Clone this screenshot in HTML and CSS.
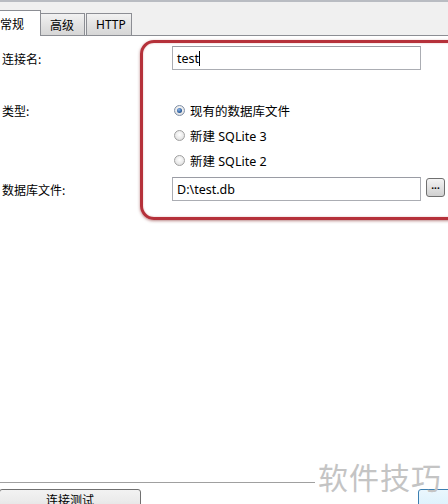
FILE: index.html
```html
<!DOCTYPE html>
<html>
<head>
<meta charset="utf-8">
<link rel="stylesheet" href="styles.css">
</head>
<body>
<div class="window">
  <div class="tabstrip">
    <div class="tab active">常规</div>
    <div class="tab">高级</div>
    <div class="tab">HTTP</div>
    <div class="tabfill"></div>
  </div>
  <div class="panel">
    <div class="row row-name">
      <div class="label">连接名:</div>
      <div class="input"><span>test</span><span class="caret"></span></div>
    </div>
    <div class="row row-type">
      <div class="label">类型:</div>
      <div class="radios">
        <div class="radio-row"><span class="radio checked"></span><span>现有的数据库文件</span></div>
        <div class="radio-row"><span class="radio"></span><span>新建 SQLite 3</span></div>
        <div class="radio-row"><span class="radio"></span><span>新建 SQLite 2</span></div>
      </div>
    </div>
    <div class="row row-file">
      <div class="label">数据库文件:</div>
      <div class="input"><span>D:\test.db</span></div>
      <div class="browse">...</div>
    </div>
    <div class="spacer"></div>
    <div class="footer">
      <div class="sep"></div>
      <div class="buttons">
        <div class="btn test">连接测试</div>
        <div class="btn ok"></div>
      </div>
    </div>
    <div class="highlight"></div>
    <div class="watermark">软件技巧</div>
  </div>
</div>
</body>
</html>
```

FILE: styles.css
```css
html, body {
  margin: 0;
  padding: 0;
}
body {
  width: 448px;
  height: 504px;
  overflow: hidden;
  background: #ffffff;
  font-family: "Noto Sans", "Noto Sans CJK SC", sans-serif;
  font-size: 12px;
  color: #000;
}
.window {
  height: 504px;
  display: flex;
  flex-direction: column;
  background: #f0f0f0;
  border-top: 2px solid #b9bcc2;
  box-sizing: border-box;
}
.tabstrip {
  display: flex;
  align-items: flex-end;
  height: 34px;
  box-sizing: border-box;
}
.tab {
  height: 22px;
  box-sizing: border-box;
  border: 1px solid #8c8e94;
  border-bottom: none;
  background: linear-gradient(#f2f2f2, #e3e3e3 50%, #d6d6d6);
  padding: 0 9px;
  display: flex;
  align-items: center;
  font-family: "Noto Sans CJK SC", sans-serif;
  font-size: 12px;
  margin-right: 2px;
  margin-bottom: 1px;
}
.tab:nth-child(2) { width: 44px; margin-right: 1px; border-left: none; }
.tab:nth-child(3) { width: 46px; font-family: "Noto Sans", sans-serif; }
.tab.active {
  background: #fff;
  height: 26px;
  width: 41px;
  padding-left: 0;
  margin-right: 0;
  margin-bottom: 0;
  border-left: none;
  position: relative;
  z-index: 1;
}
.tabfill {
  flex: 1;
  border-bottom: 1px solid #8c8e94;
  align-self: stretch;
}
.tab:nth-child(2), .tab:nth-child(3) {
  border-bottom: 1px solid #8c8e94;
  margin-bottom: 0;
  height: 23px;
}
.panel {
  flex: 1;
  position: relative;
  background: #fff;
  display: flex;
  flex-direction: column;
  margin-top: -1px;
  border-top: 1px solid #8c8e94;
}
.row {
  display: flex;
  align-items: center;
}
.label {
  width: 172px;
  padding-left: 2px;
  box-sizing: border-box;
  font-family: "Noto Sans CJK SC", sans-serif;
  font-size: 12px;
  flex-shrink: 0;
}
.row-name {
  margin-top: 10px;
  position: relative;
  z-index: 2;
}
.input {
  width: 249px;
  height: 24px;
  box-sizing: border-box;
  border: 1px solid #abadb3;
  border-top-color: #9a9ca4;
  background: #fff;
  display: flex;
  align-items: center;
  padding-left: 4px;
  font-family: "Noto Sans", sans-serif;
  font-size: 12.5px;
}
.caret {
  display: inline-block;
  width: 1px;
  height: 15px;
  background: #000;
}
.row-type {
  margin-top: 28px;
  align-items: flex-start;
  position: relative;
  z-index: 2;
}
.row-type .label {
  height: 25px;
  display: flex;
  align-items: center;
}
.radios {
  display: flex;
  flex-direction: column;
}
.radio-row {
  height: 25px;
  display: flex;
  align-items: center;
  gap: 5px;
  padding-left: 2px;
  font-family: "Noto Sans", "Noto Sans CJK SC", sans-serif;
  font-size: 12.5px;
}
.radio {
  width: 11px;
  height: 11px;
  border-radius: 50%;
  border: 1px solid #a0a0a0;
  background: radial-gradient(circle at 50% 40%, #ffffff 0%, #e8e8e8 60%, #cfcfcf 100%);
  box-sizing: border-box;
  position: relative;
  flex-shrink: 0;
}
.radio.checked {
  border-color: #7f8fa6;
}
.radio.checked::after {
  content: "";
  position: absolute;
  left: 2px;
  top: 2px;
  width: 5px;
  height: 5px;
  border-radius: 50%;
  background: radial-gradient(circle at 40% 35%, #8fb6e8 0%, #2c5e9e 60%, #1c3f70 100%);
}
.row-file {
  margin-top: 4px;
  position: relative;
  z-index: 2;
}
.browse {
  width: 19px;
  height: 19px;
  margin-left: 5px;
  box-sizing: border-box;
  border: 1px solid #707070;
  border-radius: 3px;
  background: linear-gradient(#f4f4f4, #e2e2e2 50%, #d0d0d0);
  font-size: 10px;
  line-height: 12px;
  text-align: center;
  font-weight: bold;
  margin-top: -4px;
}
.spacer {
  flex: 1;
}
.footer {
  display: flex;
  flex-direction: column;
}
.sep {
  width: 315px;
  height: 1px;
  background: #a0a0a0;
}
.buttons {
  display: flex;
  justify-content: space-between;
  padding-top: 6px;
  height: 15px;
  overflow: hidden;
}
.btn {
  height: 24px;
  box-sizing: border-box;
  border: 1px solid #707070;
  border-radius: 3px;
  background: linear-gradient(#f2f2f2, #ebebeb 50%, #dddddd);
  font-family: "Noto Sans CJK SC", sans-serif;
  font-size: 12px;
  text-align: center;
  line-height: 20px;
}
.btn.test {
  width: 142px;
  margin-left: -1px;
}
.btn.ok {
  width: 40px;
  margin-right: -10px;
  border-color: #3c7fb1;
  background: linear-gradient(#eaf6fd, #d9f0fc);
}
.highlight {
  position: absolute;
  left: 140px;
  top: 4px;
  width: 340px;
  height: 180px;
  border: 3px solid #b5313a;
  border-radius: 14px;
  box-shadow: 0 1px 3px rgba(120, 20, 20, 0.5), inset 0 0 2px rgba(180, 60, 60, 0.4);
  box-sizing: border-box;
  z-index: 1;
}
.watermark {
  position: absolute;
  right: 6px;
  top: 418px;
  font-family: "Noto Sans CJK SC", sans-serif;
  font-size: 30px;
  color: #c4c4c4;
  letter-spacing: 1px;
  z-index: 3;
}
```
